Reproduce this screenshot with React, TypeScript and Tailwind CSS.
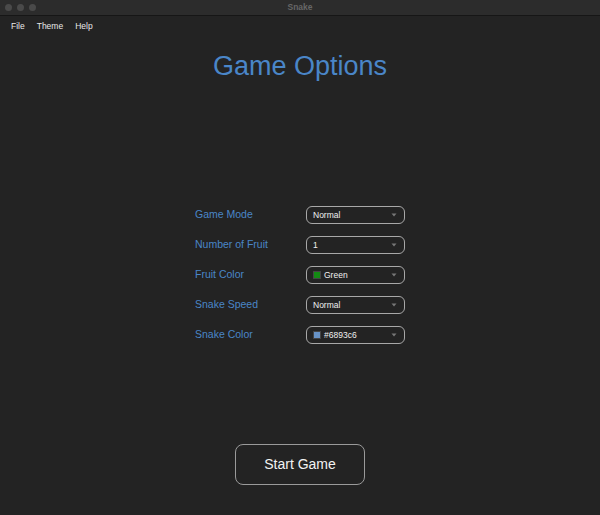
import { useState } from 'react';

const rows = [
  { label: 'Game Mode', value: 'Normal' },
  { label: 'Number of Fruit', value: '1' },
  { label: 'Fruit Color', value: 'Green', swatch: 'bg-[#138a13]' },
  { label: 'Snake Speed', value: 'Normal' },
  { label: 'Snake Color', value: '#6893c6', swatch: 'bg-[#6893c6]' },
];

function Chevron() {
  return (
    <svg width="6" height="4" viewBox="0 0 6 4" className="ml-auto mr-[1px]">
      <path d="M0.5 0.6 L3 3.4 L5.5 0.6 Z" fill="#777" />
    </svg>
  );
}

export default function App() {
  const [hover] = useState(false);

  return (
    <div
      className="w-[600px] h-[515px] flex flex-col bg-[#232323] overflow-hidden"
      style={{ fontFamily: '"Liberation Sans", Arial, sans-serif' }}
    >
      {/* title bar */}
      <div className="h-[16px] shrink-0 relative flex items-center bg-[#2c2c2c] border-b border-[#161616]">
        <div className="flex gap-[5px] pl-[5px]">
          <span className="w-[7px] h-[7px] rounded-full bg-[#4a4a4a]" />
          <span className="w-[7px] h-[7px] rounded-full bg-[#4a4a4a]" />
          <span className="w-[7px] h-[7px] rounded-full bg-[#4a4a4a]" />
        </div>
        <div className="absolute inset-0 flex items-center justify-center text-[8.5px] font-bold text-[#666]">
          Snake
        </div>
      </div>

      {/* menu bar */}
      <div className="h-[19px] pt-[2px] shrink-0 flex items-center gap-[12px] pl-[11px] text-[8.5px] text-[#e8e8e8]">
        <span>File</span>
        <span>Theme</span>
        <span>Help</span>
      </div>

      <main className="flex flex-col items-center">
        <h1 className="mt-[15px] text-[27px] leading-[32px] text-[#4a86c8]">Game Options</h1>

        <div className="mt-[124px] grid grid-cols-[111px_99px] gap-y-[12px] items-center">
          {rows.map((r) => (
            <div key={r.label} className="contents">
              <span className="text-[10.5px] text-[#4a86c8]">{r.label}</span>
              <div className="h-[18px] flex items-center px-[6px] rounded-[6px] border border-[#a8a8a8] text-[8.5px] text-[#f0f0f0]">
                {r.swatch && (
                  <span className={`w-[8px] h-[8px] mr-[3px] border border-[#444] ${r.swatch}`} />
                )}
                <span>{r.value}</span>
                <Chevron />
              </div>
            </div>
          ))}
        </div>

        <button
          className={`mt-[100px] w-[130px] h-[41px] rounded-[8px] border border-[#9a9a9a] text-[14px] text-[#f2f2f2] ${
            hover ? 'bg-[#2a2a2a]' : 'bg-transparent'
          }`}
        >
          Start Game
        </button>
      </main>
    </div>
  );
}
